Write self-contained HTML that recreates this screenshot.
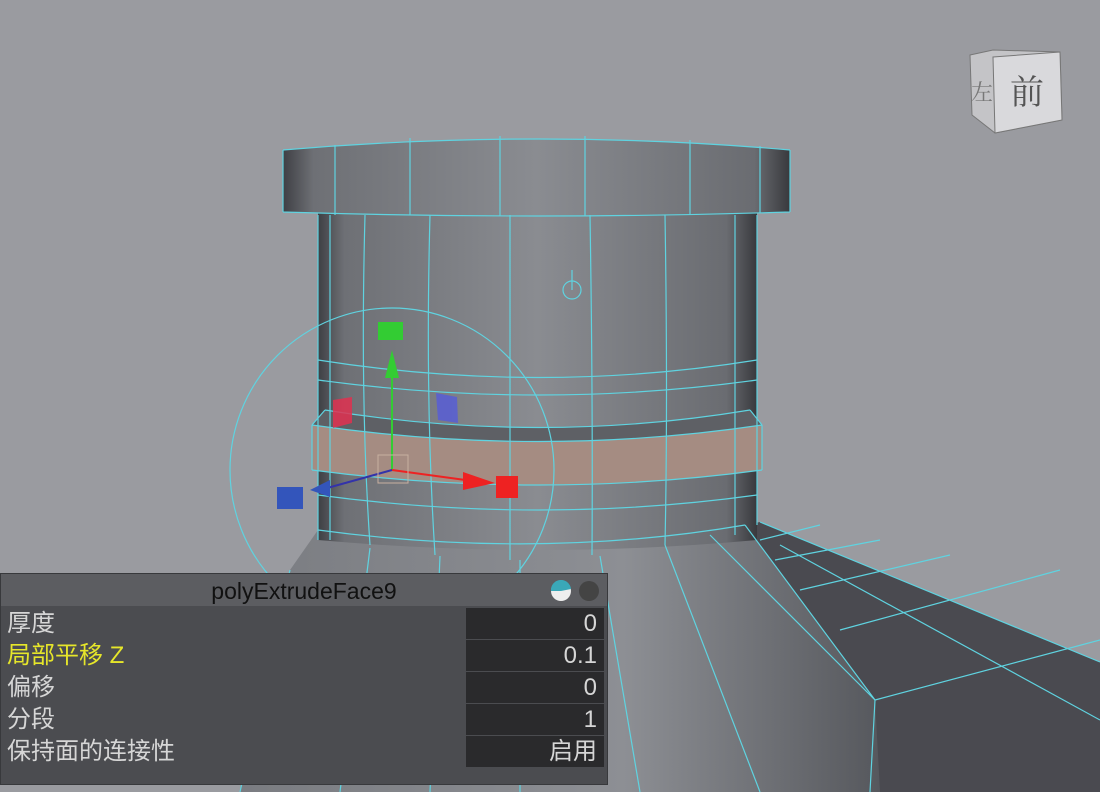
<!DOCTYPE html>
<html><head><meta charset="utf-8"><style>
body{margin:0;width:1100px;height:792px;overflow:hidden;background:#9a9ba0;font-family:"Liberation Sans","Noto Sans CJK SC",sans-serif;}
#v{position:absolute;left:0;top:0}
#panel{position:absolute;left:0;top:573px;width:608px;height:212px;background:#4b4c50;border:1px solid #38393c;box-sizing:border-box}
#title{height:32px;background:#5c5d61;color:#111;font-size:23px;text-align:center;line-height:34px;position:relative}
.row{position:absolute;left:0;width:606px;height:31px;color:#d6d6d6;font-size:24px;line-height:31px}
.row .l{position:absolute;left:6px;top:0}
.row .v{position:absolute;left:465px;top:0;width:138px;height:31px;background:#2a2a2c;text-align:right;box-sizing:border-box;padding-right:7px}
</style></head><body>
<svg id="v" width="1100" height="792" viewBox="0 0 1100 792">
<defs>
<linearGradient id="cyl" x1="0" x2="1" y1="0" y2="0">
<stop offset="0" stop-color="#3e3f44"/><stop offset="0.06" stop-color="#6e7075"/><stop offset="0.5" stop-color="#8a8c91"/><stop offset="0.93" stop-color="#6a6c71"/><stop offset="1" stop-color="#38393d"/></linearGradient>
<linearGradient id="fl" x1="0" x2="1" y1="0" y2="0">
<stop offset="0" stop-color="#7a7c81"/><stop offset="0.6" stop-color="#8d8f94"/><stop offset="1" stop-color="#56585d"/></linearGradient>
</defs>
<polygon points="745,525 760,522 1100,662 1100,792 820,792 875,700" fill="#4a4a50"/>
<polygon points="318,530 745,525 875,700 880,792 240,792 290,570" fill="url(#fl)"/>
<path d="M318,212 L757,212 L757,540 Q540,560 318,540 Z" fill="url(#cyl)"/>
<path d="M312,425 L325,410 Q540,445 750,410 L762,425 L762,470 Q540,500 312,470 Z" fill="#a58c82"/>
<path d="M312,425 L325,410 Q540,445 750,410 L762,425 Q540,458 312,425 Z" fill="#5e6065"/>
<path d="M283,150 Q540,128 790,150 L790,212 Q540,220 283,212 Z" fill="url(#cyl)"/>
<g fill="none" stroke="#5fd3e0" stroke-width="1.2">
<path d="M283,150 Q540,128 790,150 M283,212 Q540,220 790,212 M283,150 V212 M790,150 V212"/>
<path d="M335,145 V215 M410,138 V215 M500,136 V216 M585,136 V216 M690,140 V215 M760,146 V213"/>
<path d="M318,215 V540 M757,215 V525 M330,215 V540 M365,215 Q360,400 370,545 M430,215 Q425,400 435,555 M510,215 V560 M590,215 Q593,400 592,555 M665,215 Q668,400 665,545 M735,215 V535"/>
<path d="M318,360 Q540,395 757,360 M318,380 Q540,410 757,380 M325,410 Q540,445 750,410 M312,425 Q540,458 762,425 M312,470 Q540,500 762,470 M318,495 Q540,525 757,495 M318,530 Q540,560 745,525 M312,425 V470 M762,425 V470 M312,425 L325,410 M762,425 L750,410"/>
<path d="M290,570 L240,792 M370,548 L340,792 M440,556 L430,792 M520,560 L520,792 M600,556 L640,792 M665,545 L760,792 M710,535 L875,700 M745,525 L875,700"/>
<path d="M760,522 L1100,662 M875,700 L1100,640 M875,700 L870,792 M760,540 L820,525 M775,560 L880,540 M800,590 L950,555 M840,630 L1060,570 M780,545 L1100,720"/>
<circle cx="392" cy="470" r="162"/>
<circle cx="572" cy="290" r="9"/><path d="M572,270 V290"/>
</g>
<line x1="392" y1="470" x2="392" y2="360" stroke="#3c3" stroke-width="2"/>
<polygon points="385,378 399,378 392,350" fill="#3c3"/>
<rect x="378" y="322" width="25" height="18" fill="#3c3"/>
<line x1="392" y1="470" x2="480" y2="482" stroke="#e22" stroke-width="2"/>
<polygon points="463,472 463,490 495,483" fill="#e22"/>
<rect x="496" y="476" width="22" height="22" fill="#e22"/>
<line x1="392" y1="470" x2="320" y2="490" stroke="#33a" stroke-width="2"/>
<polygon points="310,490 330,480 330,497" fill="#3355bb"/>
<rect x="277" y="487" width="26" height="22" fill="#3355bb"/>
<polygon points="333,400 352,397 352,423 333,428" fill="#e03050" opacity=".85"/>
<polygon points="436,393 457,397 458,423 438,420" fill="#5a5fd0" opacity=".9"/>
<rect x="378" y="455" width="30" height="28" fill="none" stroke="#c8b0a0"/>
<polygon points="970,55 993,50 1060,52 1062,120 995,133 972,115" fill="#c4c4c7" stroke="#777"/>
<polygon points="993,57 1060,52 1062,120 995,133" fill="#d9d9dc" stroke="#777"/>
<text x="1027" y="104" font-size="34" text-anchor="middle" fill="#555" font-family="Noto Serif CJK SC,serif">前</text>
<text x="982" y="100" font-size="22" text-anchor="middle" fill="#777" font-family="Noto Serif CJK SC,serif">左</text>
</svg>
<div id="panel">
<div id="title">polyExtrudeFace9
<svg style="position:absolute;right:6px;top:6px" width="50" height="22"><circle cx="10" cy="11" r="10" fill="#eee"/><path d="M10,11 L0,11 A10,10 0 1 1 20,9 Z" fill="#3aa8b8"/><circle cx="38" cy="11" r="10" fill="#444"/></svg></div>
<div class="row" style="top:34px"><span class="l">厚度</span><span class="v">0</span></div>
<div class="row" style="top:66px;color:#e6e62a"><span class="l">局部平移 Z</span><span class="v" style="color:#d6d6d6">0.1</span></div>
<div class="row" style="top:98px"><span class="l">偏移</span><span class="v">0</span></div>
<div class="row" style="top:130px"><span class="l">分段</span><span class="v">1</span></div>
<div class="row" style="top:162px"><span class="l">保持面的连接性</span><span class="v">启用</span></div>
</div>
</body></html>
